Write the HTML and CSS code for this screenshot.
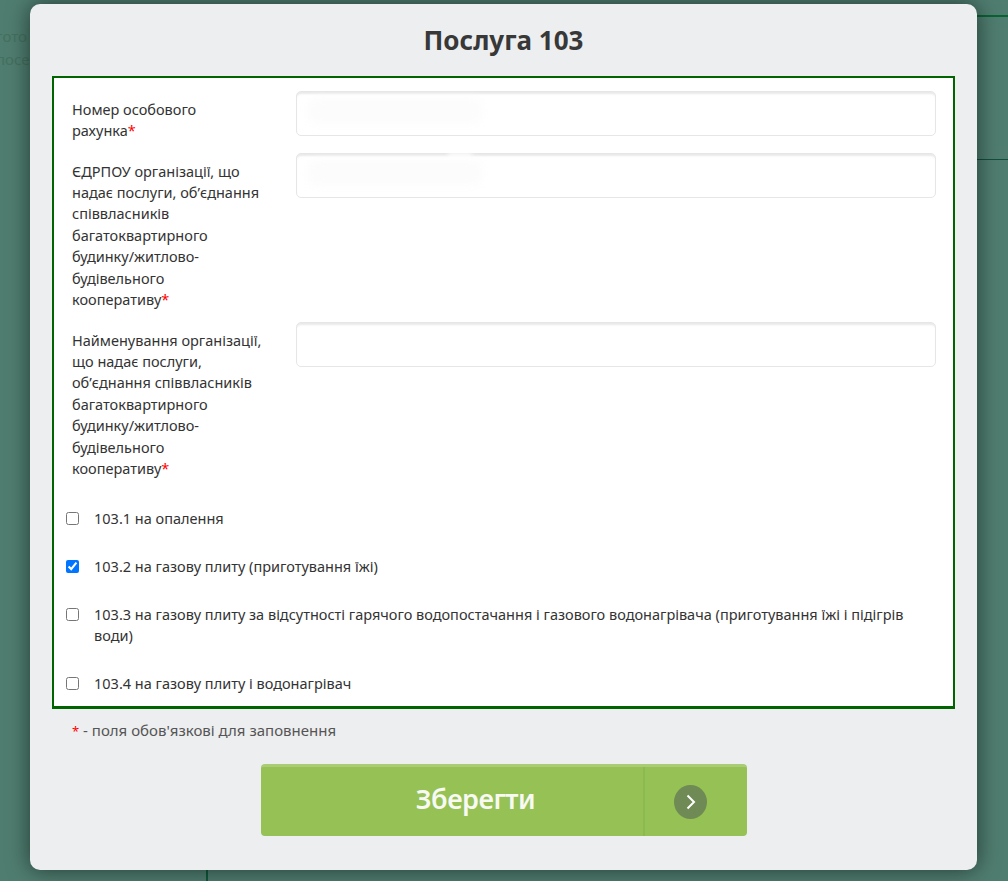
FILE: index.html
```html
<!DOCTYPE html>
<html lang="uk">
<head>
    <meta charset="UTF-8">
    <title>Послуга 103</title>
    <link rel="stylesheet" href="styles.css">
</head>
<body>
    <div class="behind">
        <p class="behind-text one">гото</p>
        <p class="behind-text two">посе</p>
        <div class="behind-line top"></div>
        <div class="behind-line middle"></div>
        <div class="behind-line vertical"></div>
    </div>

    <div class="modal">
        <h2 class="modal-title">Послуга 103</h2>

        <form class="form-box">
            <div class="field">
                <label class="field-label">Номер особового рахунка<span class="req">*</span></label>
                <div class="field-input"><input type="text"><span class="smudge"></span></div>
            </div>
            <div class="field">
                <label class="field-label">ЄДРПОУ організації, що надає послуги, об’єднання співвласників багатоквартирного будинку/житлово-будівельного кооперативу<span class="req">*</span></label>
                <div class="field-input"><input type="text"><span class="smudge"></span><span class="nick"></span></div>
            </div>
            <div class="field">
                <label class="field-label">Найменування організації, що надає послуги, об’єднання співвласників багатоквартирного будинку/житлово-будівельного кооперативу<span class="req">*</span></label>
                <div class="field-input"><input type="text"></div>
            </div>

            <div class="checks">
                <label class="check"><input type="checkbox"><span>103.1 на опалення</span></label>
                <label class="check"><input type="checkbox" checked><span>103.2 на газову плиту (приготування їжі)</span></label>
                <label class="check"><input type="checkbox"><span>103.3 на газову плиту за відсутності гарячого водопостачання і газового водонагрівача (приготування їжі і підігрів води)</span></label>
                <label class="check"><input type="checkbox"><span>103.4 на газову плиту і водонагрівач</span></label>
            </div>
        </form>

        <p class="hint"><span class="req hint-star">*</span> - поля обов'язкові для заповнення</p>

        <button class="save-btn" type="button">
            <span class="save-text">Зберегти</span>
            <span class="save-arrow">
                <span class="arrow-circle">
                    <svg width="12" height="16" viewBox="0 0 12 16"><path d="M2.5 1.5 L9 8 L2.5 14.5" fill="none" stroke="#fff" stroke-width="2"/></svg>
                </span>
            </span>
        </button>
    </div>
</body>
</html>
```

FILE: styles.css
```css
html, body {
    height: 881px;
    overflow: hidden;
}
body {
    margin: 0;
    background-color: #4f7d6f;
    font-family: "Noto Sans", Arial, sans-serif;
    color: #333;
    position: relative;
}
.behind-text {
    position: absolute;
    left: -4px;
    margin: 0;
    font-size: 15px;
    color: #44705f;
}
.behind-text.one { top: 26px; }
.behind-text.two { top: 49px; }
.behind-line {
    position: absolute;
    background-color: #0e5a3a;
}
.behind-line.top { left: 977px; right: 0; top: 15px; height: 2px; background-color: #0b6236; }
.behind-line.middle { left: 977px; right: 0; top: 159px; height: 1px; background-color: #124f3e; }
.behind-line.vertical { left: 206px; top: 870px; width: 2px; height: 11px; }

.modal {
    position: absolute;
    left: 30px;
    top: 4px;
    box-sizing: border-box;
    width: 947px;
    height: 866px;
    padding: 0 22px;
    background-color: #edeef0;
    border-radius: 10px;
    box-shadow: 0 0 22px rgba(0, 0, 0, 0.55);
}
.modal-title {
    margin: 0;
    height: 72px;
    line-height: 73px;
    text-align: center;
    font-size: 26px;
    font-weight: 700;
    color: #383838;
}
.form-box {
    box-sizing: border-box;
    width: 903px;
    height: 633px;
    padding: 14px 17px 0 18px;
    background-color: #fff;
    border: 2px solid #006400;
    border-bottom-width: 3px;
}
.field {
    display: flex;
    margin-bottom: 12.7px;
}
.field-label {
    width: 224px;
    flex-shrink: 0;
    box-sizing: border-box;
    padding: 6.5px 33px 0 0;
    font-size: 14.5px;
    line-height: 21.4px;
    color: #333;
}
.req { color: #f00; }
.field-input {
    position: relative;
    flex: 1;
    height: 45px;
    margin-top: -1px;
}
.field-input input {
    box-sizing: border-box;
    display: block;
    width: 100%;
    height: 45px;
    border: 1px solid #e6e6e6;
    border-radius: 5px;
    background-color: #fff;
    box-shadow: inset 0 3px 2px -1px #e9e9e9;
    outline: none;
}
.smudge {
    position: absolute;
    left: 12px;
    top: 7px;
    width: 174px;
    height: 26px;
    background-color: #fcfcfc;
    border-radius: 8px;
    filter: blur(4px);
}
.nick {
    position: absolute;
    left: 152px;
    top: 0;
    width: 24px;
    height: 4px;
    background-color: #fff;
    filter: blur(2px);
}
.checks {
    margin-top: 28.5px;
}
.check {
    display: flex;
    align-items: flex-start;
    margin: 0 0 26.6px -6px;
    font-size: 14.5px;
    line-height: 21.4px;
    color: #333;
}
.check input {
    width: 13px;
    height: 13px;
    margin: 4px 15px 0 0;
    flex-shrink: 0;
}
.hint {
    margin: 11px 0 0 20px;
    font-size: 15px;
    line-height: 21px;
    color: #555;
}
.hint-star {
    font-size: 13px;
}
.save-btn {
    display: flex;
    box-sizing: border-box;
    width: 486px;
    height: 72px;
    margin: 22px auto 0;
    padding: 0;
    background-color: #95c155;
    border: none;
    border-top: 3px solid #a9cc74;
    border-radius: 4px;
    font-family: inherit;
}
.save-text {
    flex: 1;
    padding-left: 48px;
    line-height: 63px;
    font-size: 27px;
    font-weight: 600;
    color: #f7f9f2;
    text-align: center;
    letter-spacing: -0.5px;
}
.save-arrow {
    display: flex;
    align-items: center;
    justify-content: center;
    box-sizing: border-box;
    width: 104px;
    padding-right: 10px;
    border-left: 2px solid #8dba50;
}
.arrow-circle {
    display: flex;
    align-items: center;
    justify-content: center;
    width: 33px;
    height: 34px;
    border-radius: 50%;
    background-color: #6f8a54;
}
```
